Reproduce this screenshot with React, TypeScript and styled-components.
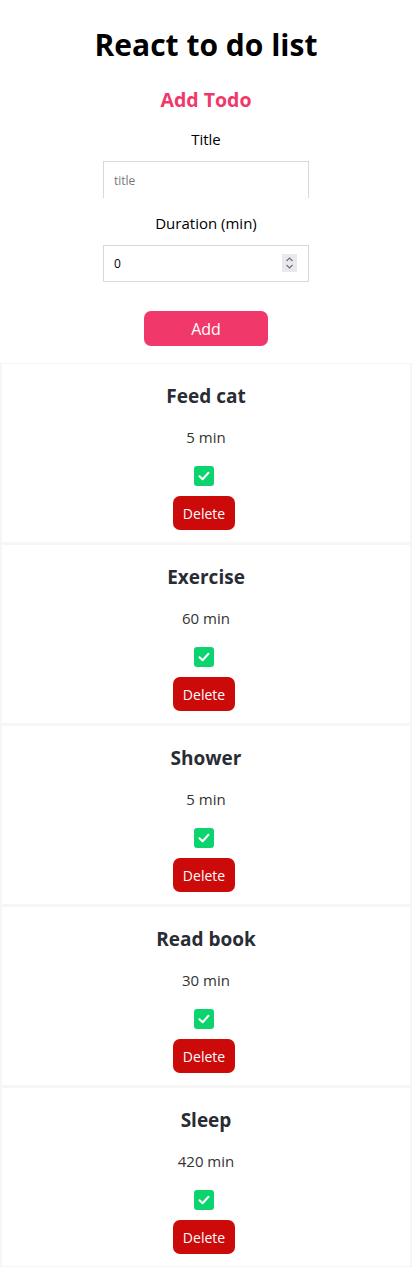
import React, { useState } from 'react';
import styled, { createGlobalStyle } from 'styled-components';

const GlobalStyle = createGlobalStyle`
  * {
    box-sizing: border-box;
  }
  body {
    margin: 0;
    background: #ffffff;
    font-family: 'Open Sans', 'Noto Sans', sans-serif;
  }
`;

const Page = styled.div`
  display: flex;
  flex-direction: column;
  align-items: center;
  width: 412px;
`;

const Heading = styled.h1`
  margin: 23px 0 0;
  font-size: 30px;
  line-height: 44px;
  font-weight: 700;
  color: #000;
`;

const Form = styled.form`
  display: flex;
  flex-direction: column;
  align-items: center;
  margin-top: 19px;
`;

const FormTitle = styled.h2`
  margin: 0;
  font-size: 19.5px;
  line-height: 28px;
  font-weight: 700;
  color: #f0386b;
`;

const Label = styled.label<{ $gap: number }>`
  margin-top: ${({ $gap }) => $gap}px;
  font-size: 15px;
  line-height: 22px;
  color: #000;
`;

const Field = styled.div`
  position: relative;
  margin-top: 11px;
`;

const TextInput = styled.input<{ $open?: boolean }>`
  display: block;
  width: 206px;
  height: 37px;
  padding: 0 10px;
  border: 1px solid #d9d9d9;
  border-bottom: ${({ $open }) => ($open ? 'none' : '1px solid #d9d9d9')};
  font-family: inherit;
  font-size: 12px;
  color: #000;
  outline: none;
  -moz-appearance: textfield;
  &::placeholder {
    color: #777;
  }
  &::-webkit-inner-spin-button,
  &::-webkit-outer-spin-button {
    -webkit-appearance: none;
    margin: 0;
  }
`;

const Spinner = styled.span`
  position: absolute;
  top: 9px;
  right: 12px;
  display: flex;
  align-items: center;
  justify-content: center;
  width: 15px;
  height: 18px;
  background: #e9e9ed;
  pointer-events: none;
`;

const AddButton = styled.button`
  width: 124px;
  height: 35px;
  margin-top: 29px;
  margin-bottom: 17px;
  border: none;
  border-radius: 7px;
  background: #f0386b;
  color: #fff;
  font-family: inherit;
  font-size: 16px;
  cursor: pointer;
`;

const List = styled.div`
  display: flex;
  flex-direction: column;
  width: 100%;
`;

const Card = styled.div`
  display: flex;
  flex-direction: column;
  align-items: center;
  height: 181px;
  padding-top: 19px;
  border: 2px solid #f6f6f6;
  border-top-width: 1px;
`;

const CardTitle = styled.h3`
  margin: 0;
  font-size: 19px;
  line-height: 26px;
  font-weight: 700;
  color: #282c34;
`;

const Duration = styled.p`
  margin: 17px 0 0;
  font-size: 15px;
  line-height: 22px;
  color: #333;
`;

const Check = styled.span`
  display: flex;
  align-items: center;
  justify-content: center;
  width: 20px;
  height: 20px;
  margin-top: 18px;
  margin-right: 4px;
  border-radius: 3px;
  background: #0bd46f;
`;

const DeleteButton = styled.button`
  width: 62px;
  height: 34px;
  margin-top: 10px;
  margin-right: 4px;
  border: none;
  border-radius: 7px;
  background: #cc0a0a;
  color: #fff;
  font-family: inherit;
  font-size: 14px;
  cursor: pointer;
`;

const todos = [
  { title: 'Feed cat', duration: 5 },
  { title: 'Exercise', duration: 60 },
  { title: 'Shower', duration: 5 },
  { title: 'Read book', duration: 30 },
  { title: 'Sleep', duration: 420 },
];

export default function App() {
  const [title, setTitle] = useState('');
  const [duration, setDuration] = useState('0');

  return (
    <>
      <GlobalStyle />
      <Page>
        <Heading>React to do list</Heading>
        <Form onSubmit={(e) => e.preventDefault()}>
          <FormTitle>Add Todo</FormTitle>
          <Label $gap={14}>Title</Label>
          <Field>
            <TextInput
              $open
              placeholder="title"
              value={title}
              onChange={(e) => setTitle(e.target.value)}
            />
          </Field>
          <Label $gap={14}>Duration (min)</Label>
          <Field>
            <TextInput
              type="number"
              value={duration}
              onChange={(e) => setDuration(e.target.value)}
            />
            <Spinner>
              <svg width="9" height="14" viewBox="0 0 9 14" fill="none">
                <path
                  d="M1.5 5 L4.5 2 L7.5 5 M1.5 9 L4.5 12 L7.5 9"
                  stroke="#6d6d75"
                  strokeWidth="1.1"
                />
              </svg>
            </Spinner>
          </Field>
          <AddButton type="submit">Add</AddButton>
        </Form>
        <List>
          {todos.map((todo) => (
            <Card key={todo.title}>
              <CardTitle>{todo.title}</CardTitle>
              <Duration>{todo.duration} min</Duration>
              <Check>
                <svg width="14" height="14" viewBox="0 0 14 14" fill="none">
                  <path
                    d="M2.5 7.2 L5.6 10.2 L11.5 3.8"
                    stroke="#fff"
                    strokeWidth="2"
                    strokeLinecap="round"
                    strokeLinejoin="round"
                  />
                </svg>
              </Check>
              <DeleteButton>Delete</DeleteButton>
            </Card>
          ))}
        </List>
      </Page>
    </>
  );
}
